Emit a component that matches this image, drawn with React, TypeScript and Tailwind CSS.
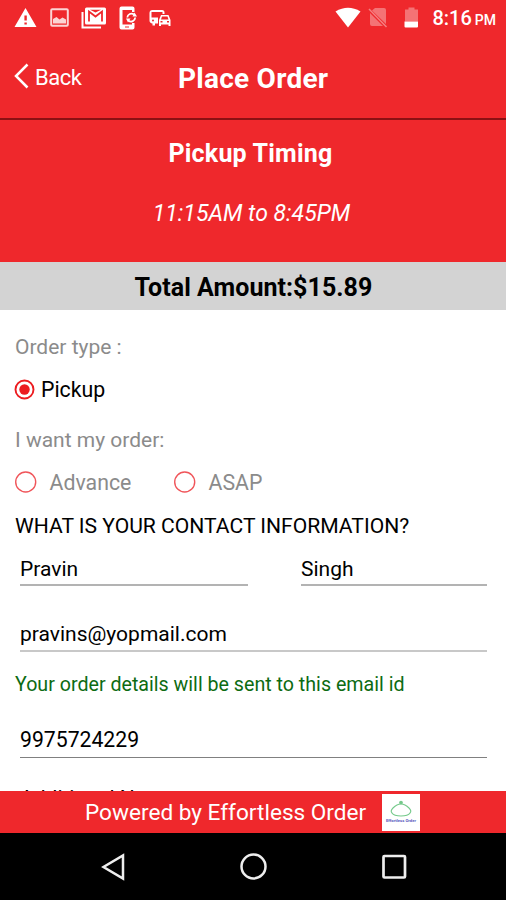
import React from 'react'

function StatusBar() {
  return (
    <div className="flex h-[36px] items-center pl-[14px] pr-[10px] text-white">
      <svg width="23" height="21" viewBox="0 0 23 21" fill="currentColor">
        <path fillRule="evenodd" d="M11.5 0L22.5 19H.5L11.5 0ZM10.4 7.5V12.6H12.8V7.5H10.4ZM10.4 14.4V16.6H12.8V14.4H10.4Z" />
      </svg>
      <svg className="mb-px ml-[13px] opacity-80" width="19" height="19" viewBox="0 0 19 19" fill="none">
        <rect x="1.2" y="1.2" width="16.6" height="16.6" rx="1" stroke="white" strokeWidth="2" />
        <path d="M3 15.500V11L6.500 9L9.500 11.500L12.500 9.500L16 11.500V15.500Z" fill="white" />
      </svg>
      <svg className="mb-px ml-[12px]" width="26" height="22" viewBox="0 0 26 22" fill="none">
        <path d="M1.500 5V20.500H20" stroke="white" strokeWidth="2" />
        <rect x="4" y=".5" width="21" height="17" rx="1.500" fill="white" />
        <path d="M8 14.500V4.500L14.500 9.500L21 4.500V14.500" stroke="#ef282c" strokeWidth="1.800" />
        <path d="M9 2.800H20L14.500 5.500Z" fill="#ef282c" />
      </svg>
      <svg className="mb-px ml-[12px]" width="19" height="24" viewBox="0 0 19 24" fill="none">
        <path fillRule="evenodd" d="M2.500 .5H13.500Q15.500 .5 15.500 2.500V6H13V4H3.500V18.500H13V17H15.500V21.500Q15.500 23.500 13.500 23.500H2.500Q.5 23.500 .5 21.500V2.500Q.5 .5 2.500 .5Z" fill="white" />
        <path d="M8.300 11.500A4.200 4.200 0 0 1 15 8.500M16.200 11.500A4.200 4.200 0 0 1 9.500 14.700" stroke="white" strokeWidth="1.800" />
        <path d="M13.500 10.500H18L15.500 6.500ZM11.500 12.500H7L9 16.500Z" fill="white" />
        <path d="M6 21H10" stroke="#ef282c" />
      </svg>
      <svg className="mb-px ml-[11px]" width="22" height="18" viewBox="0 0 22 18" fill="currentColor">
        <path fillRule="evenodd" d="M3.500 1H13Q15.500 1 15.500 3.500V5H13.500V3H2.500V8.500H9V14.500H6V16.500H3.500V14.500Q.5 14 .5 11.500V4Q.5 1 3.500 1Z" />
        <path fillRule="evenodd" d="M12 6H19.500L21.500 11V17H19.500V15.500H12V17H10V11L12 6ZM13 7.500L12 10.500H19.500L18.500 7.500H13ZM11.500 12V13.500H13.500V12H11.500ZM18 12V13.500H20V12H18Z" />
        <circle cx="4" cy="11.500" r="1" fill="#ef282c" />
      </svg>

      <div className="ml-auto flex items-center">
        <svg className="mb-[2px]" width="26" height="21" viewBox="0 0 26 21" fill="currentColor">
          <path d="M.5 4.500Q13-3 25.500 4.500L13 20.500Z" />
        </svg>
        <svg className="mb-px ml-[7px]" width="20" height="21" viewBox="0 0 20 21">
          <path d="M7 1H16Q18 1 18 3V17L4 3.500ZM2 6L15 19H4Q2 19 2 17Z" fill="white" opacity=".35" />
          <path d="M1 2L18.500 20" stroke="white" strokeWidth="1.500" opacity=".4" />
        </svg>
        <svg className="mb-[2px] ml-[16px]" width="15" height="21" viewBox="0 0 15 21" fill="currentColor">
          <path d="M1 2.500H4.500V.5H10.500V2.500H14V14.500H1Z" opacity=".35" />
          <path d="M.5 14.500H14V19.500Q14 20.500 13 20.500H1.500Q.5 20.500 .5 19.500Z" />
        </svg>
        <div className="mt-[2px] ml-[13px] flex items-baseline whitespace-nowrap font-medium">
          <span className="text-[20px] leading-[36px]">8:16</span>
          <span className="ml-[3px] text-[14px] leading-[36px]">PM</span>
        </div>
      </div>
    </div>
  )
}

function Header() {
  return (
    <div className="flex h-[82px] items-center pl-[14px] text-white">
      <button className="flex w-[164px] items-center">
        <svg className="mb-[2px]" width="15" height="26" viewBox="0 0 15 26" fill="none" stroke="currentColor" strokeWidth="2.500">
          <path d="M13.500 1.500L2 13L13.500 24.500" />
        </svg>
        <span className="ml-[6px] text-[22px] tracking-[-0.5px]">Back</span>
      </button>
      <h1 className="pt-[3px] text-[28px] font-bold tracking-[0.250px] whitespace-nowrap">Place Order</h1>
    </div>
  )
}

function Radio({ label, checked = false }: { label: string; checked?: boolean }) {
  return (
    <label className="flex items-center">
      {checked ? (
        <svg className="mb-[2px] -ml-px" width="21" height="21" viewBox="0 0 21 21">
          <circle cx="10.500" cy="10.500" r="9" fill="none" stroke="#ec1c20" strokeWidth="1.900" />
          <circle cx="10.500" cy="10.500" r="5.200" fill="#ec1c20" />
        </svg>
      ) : (
        <svg className="mb-[2px] -ml-[0.500px]" width="22" height="22" viewBox="0 0 22 22">
          <circle cx="10.700" cy="11" r="10" fill="none" stroke="#f0555a" strokeWidth="1.400" />
        </svg>
      )}
      <span className={checked ? 'ml-[6px] text-[21.3px] text-black' : 'ml-[13px] text-[21.3px] text-[#8b8b8b]'}>{label}</span>
    </label>
  )
}

function Field({ value, className }: { value: string; className: string }) {
  return <div className={`flex shrink-0 items-center whitespace-nowrap text-black ${className}`}>{value}</div>
}

function Footer() {
  return (
    <div className="flex h-[42px] shrink-0 items-center bg-[#ef282c] pl-[85px] text-white">
      <span className="w-[297px] pt-[2px] text-[22.6px] whitespace-nowrap">Powered by Effortless Order</span>
      <div className="flex h-[37px] w-[38px] flex-col items-center bg-white pt-[6px]">
        <svg width="24" height="18" viewBox="0 0 24 18" fill="none" stroke="#74c98a" strokeWidth="1.100">
          <circle cx="12" cy="2.500" r="1.300" fill="#74c98a" />
          <path d="M3 13Q1 11 4 8Q8 4 12 4T20 8Q23 11 21 13Q19 16 12 16T3 13Z" />
        </svg>
        <span className="text-[4.200px] leading-[5px] font-bold whitespace-nowrap text-[#5a5ac0]">Effortless Order</span>
      </div>
    </div>
  )
}

function NavBar() {
  return (
    <div className="flex h-[67px] shrink-0 items-center justify-between bg-black pr-[99px] pl-[99px]">
      <svg width="26" height="28" viewBox="0 0 26 28" fill="none" stroke="#eee" strokeWidth="2.500">
        <path d="M24 2.500V25.500L4.500 14Z" />
      </svg>
      <svg width="28" height="28" viewBox="0 0 28 28" fill="none" stroke="#eee" strokeWidth="2.500">
        <circle cx="14.500" cy="13.500" r="12" />
      </svg>
      <svg width="26" height="26" viewBox="0 0 26 26" fill="none" stroke="#eee" strokeWidth="2.700">
        <rect x="2.500" y="2" width="21.500" height="21.500" rx="1" />
      </svg>
    </div>
  )
}

export default function App() {
  return (
    <div className="flex h-[900px] w-[506px] flex-col overflow-hidden bg-white font-['Roboto',sans-serif] text-[21px]">
      <div className="shrink-0 bg-[#ef282c]">
        <StatusBar />
        <Header />
      </div>
      <div className="flex h-[144px] shrink-0 flex-col items-center border-t-2 border-[#8c1013] bg-[#ef282c] pr-[5px] text-white">
        <h2 className="mt-[16px] text-[25px] leading-[36px] font-bold tracking-[0.200px]">Pickup Timing</h2>
        <p className="mt-[24px] pl-[2px] text-[23px] leading-[36px] italic">11:15AM to 8:45PM</p>
      </div>
      <div className="flex h-[48px] shrink-0 items-center justify-center bg-[#d3d3d3] pt-[4px] pl-px text-[25px] font-bold tracking-[0.050px] text-black">
        Total Amount:$15.89
      </div>

      <div className="flex min-h-0 flex-1 flex-col overflow-hidden pr-[19px] pl-[15px] leading-[30px] whitespace-nowrap">
        <p className="mt-[22px] text-[#8b8b8b]">Order type :</p>
        <div className="mt-[13px]">
          <Radio label="Pickup" checked />
        </div>
        <p className="mt-[20px] text-[#8b8b8b]">I want my order:</p>
        <div className="mt-[13px] flex">
          <div className="w-[159px]">
            <Radio label="Advance" />
          </div>
          <Radio label="ASAP" />
        </div>
        <p className="mt-[13px] text-[21.100px] text-black">WHAT IS YOUR CONTACT INFORMATION?</p>
        <div className="mt-[12px] flex shrink-0 justify-between pl-[5px]">
          <Field value="Pravin" className="h-[33px] w-[228px] border-b-2 border-[#b3b3b3]" />
          <Field value="Singh" className="h-[33px] w-[186px] border-b-2 border-[#b3b3b3]" />
        </div>
        <Field value="pravins@yopmail.com" className="mt-[32px] ml-[5px] h-[34px] border-b-2 border-[#c8c8c8]" />
        <p className="mt-[18px] text-[19.650px] text-[#0d6b12]">Your order details will be sent to this email id</p>
        <Field value="9975724229" className="mt-[23px] ml-[5px] h-[35px] border-b border-[#808080] text-[21.200px]" />
        <p className="mt-[25px] ml-[5px] text-black">Additional Note</p>
      </div>

      <Footer />
      <NavBar />
    </div>
  )
}
